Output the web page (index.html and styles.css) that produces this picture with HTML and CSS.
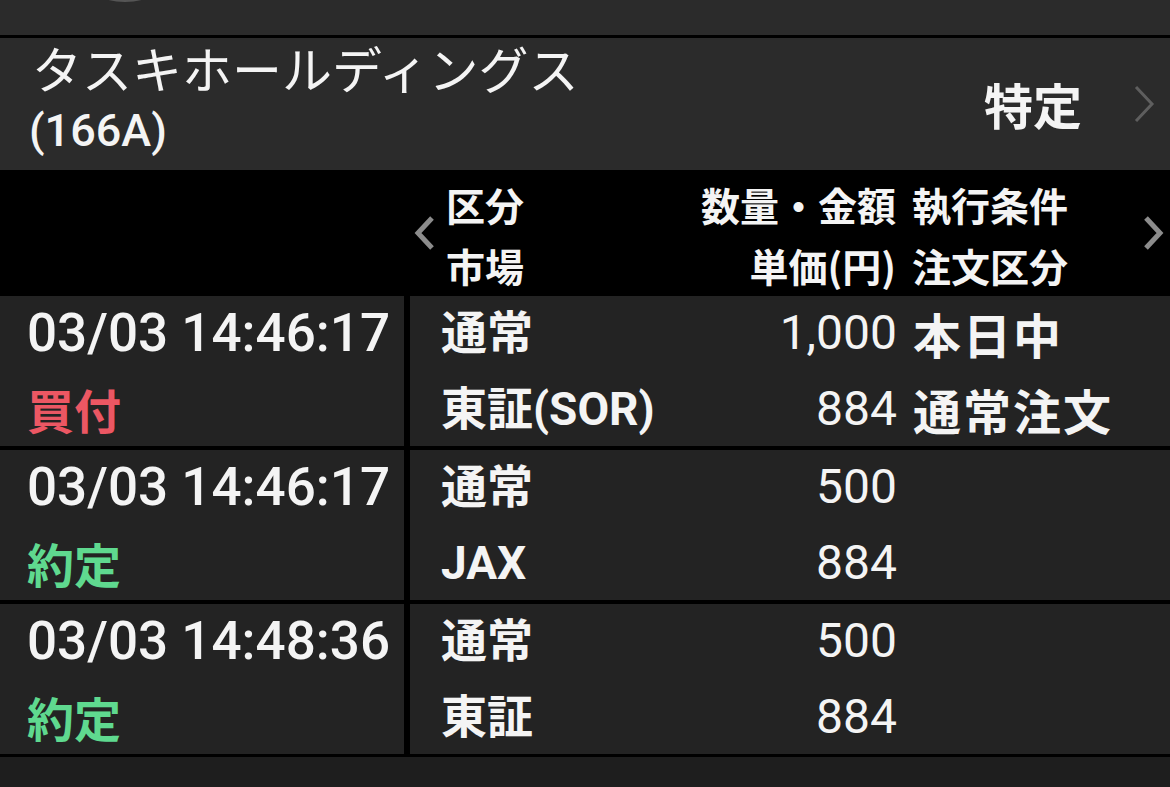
FILE: index.html
```html
<!DOCTYPE html>
<html lang="ja">
<head>
<meta charset="utf-8">
<title>注文詳細</title>
<link rel="stylesheet" href="styles.css">
</head>
<body>
<div class="topbar"><div class="circle"></div></div>
<div class="stock">
  <div class="stock-name">
    <div class="stock-title">タスキホールディングス</div>
    <div class="stock-code">(166A)</div>
  </div>
  <div class="stock-acct">
    <span class="acct">特定</span>
    <svg class="chev-gray" width="24" height="40" viewBox="0 0 24 40"><path d="M4 3 L20 20 L4 37" fill="none" stroke="#5e5e5e" stroke-width="3"/></svg>
  </div>
</div>
<div class="colhead">
  <div class="colhead-left"></div>
  <div class="colhead-right">
    <svg class="chev-left" width="26" height="36" viewBox="0 0 26 36"><path d="M20 3 L6 18 L20 33" fill="none" stroke="#8c8c8c" stroke-width="5"/></svg>
    <div class="hgrid">
      <div class="hb">区分</div>
      <div class="hc">数量・金額</div>
      <div class="hd">執行条件</div>
      <div class="hb">市場</div>
      <div class="hc">単価(円)</div>
      <div class="hd">注文区分</div>
    </div>
    <svg class="chev-right" width="26" height="36" viewBox="0 0 26 36"><path d="M6 3 L20 18 L6 33" fill="none" stroke="#8c8c8c" stroke-width="5"/></svg>
  </div>
</div>
<div class="rows">
  <div class="row">
    <div class="cell-left">
      <div class="dt">03/03 14:46:17</div>
      <div class="status buy">買付</div>
    </div>
    <div class="cell-right">
      <div class="b l1">通常</div><div class="c l1">1,000</div><div class="d l1">本日中</div>
      <div class="b l2">東証(SOR)</div><div class="c l2">884</div><div class="d l2">通常注文</div>
    </div>
  </div>
  <div class="row">
    <div class="cell-left">
      <div class="dt">03/03 14:46:17</div>
      <div class="status done">約定</div>
    </div>
    <div class="cell-right">
      <div class="b l1">通常</div><div class="c l1">500</div><div class="d l1"></div>
      <div class="b l2">JAX</div><div class="c l2">884</div><div class="d l2"></div>
    </div>
  </div>
  <div class="row">
    <div class="cell-left">
      <div class="dt">03/03 14:48:36</div>
      <div class="status done">約定</div>
    </div>
    <div class="cell-right">
      <div class="b l1">通常</div><div class="c l1">500</div><div class="d l1"></div>
      <div class="b l2">東証</div><div class="c l2">884</div><div class="d l2"></div>
    </div>
  </div>
</div>
<div class="bottom"></div>
</body>
</html>
```
FILE: styles.css
```css
* { box-sizing: border-box; }
html, body { margin: 0; padding: 0; }
body {
  width: 1170px;
  height: 787px;
  overflow: hidden;
  background: #1e1e1e;
  color: #f4f4f4;
  font-family: "Noto Sans CJK JP", sans-serif;
}
.topbar {
  position: relative;
  height: 38px;
  background: #2b2b2b;
  border-bottom: 3px solid #000;
  overflow: hidden;
}
.circle {
  position: absolute;
  left: 60px;
  top: -128px;
  width: 130px;
  height: 130px;
  border-radius: 50%;
  border: 2px solid #555;
}
.stock {
  height: 132px;
  background: #2b2b2b;
  display: flex;
  align-items: center;
  justify-content: space-between;
  padding-left: 32px;
  padding-right: 14px;
}
.stock-name {
  display: flex;
  flex-direction: column;
  padding-bottom: 6px;
}
.stock-title {
  font-size: 50px;
  line-height: 60px;
  font-weight: 400;
}
.stock-code {
  font-family: Roboto, "Noto Sans CJK JP", sans-serif;
  font-size: 45px;
  font-weight: 500;
  line-height: 68px;
  margin-left: -3px;
}
.stock-acct {
  display: flex;
  align-items: center;
  gap: 50px;
}
.acct {
  font-size: 49px;
  font-weight: 700;
  line-height: 60px;
}
.colhead {
  height: 126px;
  background: #000;
  display: flex;
}
.colhead-left { width: 410px; }
.colhead-right {
  flex: 1;
  display: flex;
  align-items: center;
}
.chev-left { margin-left: 2px; }
.chev-right { margin-left: auto; margin-right: 4px; }
.hgrid {
  display: grid;
  grid-template-columns: 190px 260px 180px;
  grid-auto-rows: 61px;
  padding-top: 4px;
  margin-left: 8px;
  font-size: 39px;
  font-weight: 700;
  line-height: 61px;
}
.hc { text-align: right; }
.hd { padding-left: 16px; }
.rows {
  background: #000;
  display: grid;
  row-gap: 4px;
  padding-bottom: 3px;
}
.row {
  display: grid;
  grid-template-columns: 404px 1fr;
  column-gap: 6px;
  height: 150px;
}
.cell-left, .cell-right { background: #232323; }
.cell-left {
  padding-left: 27px;
  display: grid;
  grid-template-rows: 77px 73px;
}
.dt {
  font-family: Roboto, sans-serif;
  font-size: 53px;
  font-weight: 500;
  line-height: 74px;
}
.status {
  font-size: 47px;
  font-weight: 700;
  line-height: 72px;
}
.buy { color: #ec5763; }
.done { color: #5fd98f; }
.cell-right {
  padding-left: 31px;
  display: grid;
  grid-template-columns: 220px 236px 1fr;
  grid-template-rows: 77px 73px;
  font-family: Roboto, "Noto Sans CJK JP", sans-serif;
}
.l1 { line-height: 74px; }
.l2 { line-height: 72px; }
.b {
  font-size: 46px;
  font-weight: 700;
}
.c {
  text-align: right;
  font-size: 48px;
  font-weight: 400;
}
.d {
  padding-left: 16px;
  font-family: "Noto Sans CJK JP", sans-serif;
  font-size: 48px;
  font-weight: 700;
  letter-spacing: 2px;
}
.bottom { height: 40px; background: #1e1e1e; }
```
